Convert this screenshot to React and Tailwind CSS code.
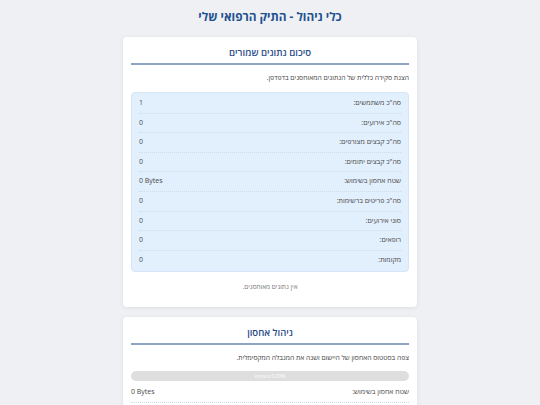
const stats = [
  { label: 'סה"כ משתמשים:', value: '1' },
  { label: 'סה"כ אירועים:', value: '0' },
  { label: 'סה"כ קבצים מצורפים:', value: '0' },
  { label: 'סה"כ קבצים יתומים:', value: '0' },
  { label: 'שטח אחסון בשימוש:', value: '0 Bytes' },
  { label: 'סה"כ פריטים ברשימות:', value: '0' },
  { label: 'סוגי אירועים:', value: '0' },
  { label: 'רופאים:', value: '0' },
  { label: 'מקומות:', value: '0' },
];

const CardTitle = ({ children }) => (
  <h2 className="text-center text-[9.5px] leading-[15px] font-semibold text-[#2a4d8a] pb-[3px] border-b-2 border-[#8fa3c4]">
    {children}
  </h2>
);

const App = () => {
  return (
    <div
      dir="rtl"
      className="min-h-screen bg-[#eef0f4] pt-[7px] pb-4 text-[#333]"
      style={{ fontFamily: '"Open Sans", "Liberation Sans", "DejaVu Sans", sans-serif' }}
    >
      <h1 className="text-center text-[11.8px] leading-[18px] font-bold text-[#22508f]">
        כלי ניהול - התיק הרפואי שלי
      </h1>

      <div className="w-[294px] mx-auto mt-[12px] bg-white rounded-[4px] shadow-[0_1px_4px_rgba(0,0,0,0.08)] px-[8px] pt-[8px] pb-[15px]">
        <CardTitle>סיכום נתונים שמורים</CardTitle>
        <p className="mt-[8px] text-[6.8px] leading-[10px] text-[#444]">
          הצגת סקירה כללית של הנתונים המאוחסנים בדפדפן.
        </p>
        <div className="mt-[9px] bg-[#e2effc] border border-[#d4e6f8] rounded-[4px] px-[7px] py-[1px]">
          {stats.map((s, i) => (
            <div
              key={i}
              className={`flex justify-between items-center h-[19.6px] text-[7px] text-[#4a4a4a] ${
                i < stats.length - 1 ? 'border-b border-dotted border-[#cfdbe8]' : ''
              }`}
            >
              <span>{s.label}</span>
              <span dir="ltr">{s.value}</span>
            </div>
          ))}
        </div>
        <p className="mt-[10px] text-center text-[6.5px] leading-[10px] text-[#777]">
          אין נתונים מאוחסנים.
        </p>
      </div>

      <div className="w-[294px] mx-auto mt-[10px] bg-white rounded-[4px] shadow-[0_1px_4px_rgba(0,0,0,0.08)] px-[8px] pt-[8px] pb-[15px]">
        <CardTitle>ניהול אחסון</CardTitle>
        <p className="mt-[8px] text-[6.8px] leading-[10px] text-[#444]">
          צפה בסטטוס האחסון של היישום ושנה את המגבלה המקסימלית.
        </p>
        <div className="mt-[8px] h-[10px] rounded-full bg-[#dedede] flex items-center justify-center">
          <span className="text-[5px] text-white">0.00% בשימוש</span>
        </div>
        <div className="flex justify-between items-center h-[22px] text-[7px] text-[#4a4a4a] border-b border-dotted border-[#cfdbe8]">
          <span>שטח אחסון בשימוש:</span>
          <span dir="ltr">0 Bytes</span>
        </div>
      </div>
    </div>
  );
};

export default App;
